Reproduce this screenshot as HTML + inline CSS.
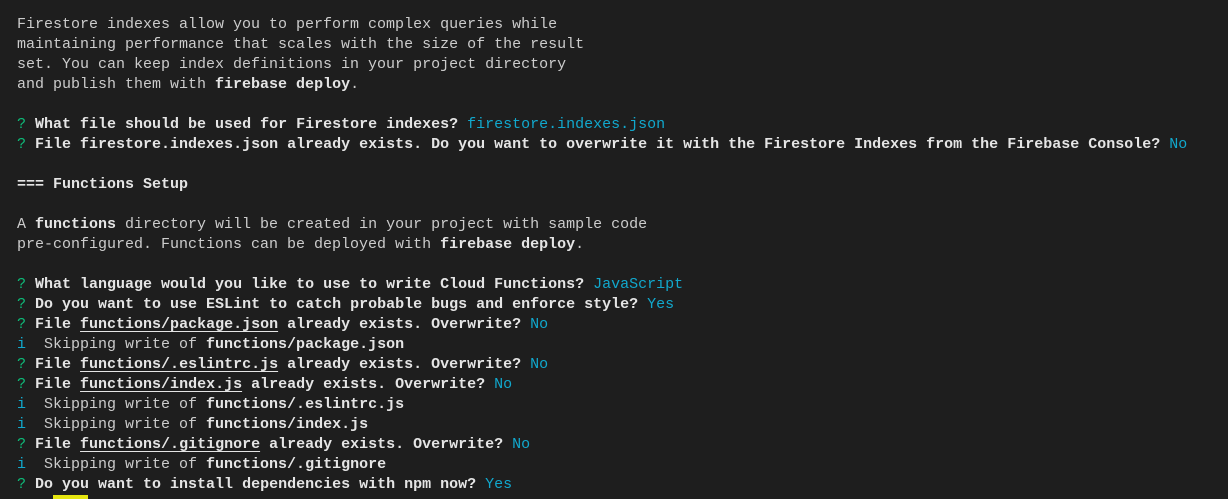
<!DOCTYPE html>
<html><head><meta charset="utf-8"><style>
html,body{margin:0;padding:0;background:#1e1e1e;width:1228px;height:499px;overflow:hidden}
pre{margin:0;padding:15px 0 0 17px;font-family:"Liberation Mono","DejaVu Sans Mono",monospace;font-size:15px;line-height:20px;color:#cccccc;white-space:pre}
b{color:#e5e5e5;font-weight:bold}
.g{color:#0dbc79}.c{color:#11a8cd}
u{text-decoration:underline;text-underline-offset:3px}
.y{position:absolute;left:53px;top:495px;width:35px;height:4px;background:#e5e510}
</style></head><body><pre>Firestore indexes allow you to perform complex queries while
maintaining performance that scales with the size of the result
set. You can keep index definitions in your project directory
and publish them with <b>firebase deploy</b>.

<span class="g">?</span> <b>What file should be used for Firestore indexes?</b> <span class="c">firestore.indexes.json</span>
<span class="g">?</span> <b>File firestore.indexes.json already exists. Do you want to overwrite it with the Firestore Indexes from the Firebase Console?</b> <span class="c">No</span>

<b>=== Functions Setup</b>

A <b>functions</b> directory will be created in your project with sample code
pre-configured. Functions can be deployed with <b>firebase deploy</b>.

<span class="g">?</span> <b>What language would you like to use to write Cloud Functions?</b> <span class="c">JavaScript</span>
<span class="g">?</span> <b>Do you want to use ESLint to catch probable bugs and enforce style?</b> <span class="c">Yes</span>
<span class="g">?</span> <b>File <u>functions/package.json</u> already exists. Overwrite?</b> <span class="c">No</span>
<span class="c">i</span>  Skipping write of <b>functions/package.json</b>
<span class="g">?</span> <b>File <u>functions/.eslintrc.js</u> already exists. Overwrite?</b> <span class="c">No</span>
<span class="g">?</span> <b>File <u>functions/index.js</u> already exists. Overwrite?</b> <span class="c">No</span>
<span class="c">i</span>  Skipping write of <b>functions/.eslintrc.js</b>
<span class="c">i</span>  Skipping write of <b>functions/index.js</b>
<span class="g">?</span> <b>File <u>functions/.gitignore</u> already exists. Overwrite?</b> <span class="c">No</span>
<span class="c">i</span>  Skipping write of <b>functions/.gitignore</b>
<span class="g">?</span> <b>Do you want to install dependencies with npm now?</b> <span class="c">Yes</span></pre>
<div class="y"></div>
</body></html>
